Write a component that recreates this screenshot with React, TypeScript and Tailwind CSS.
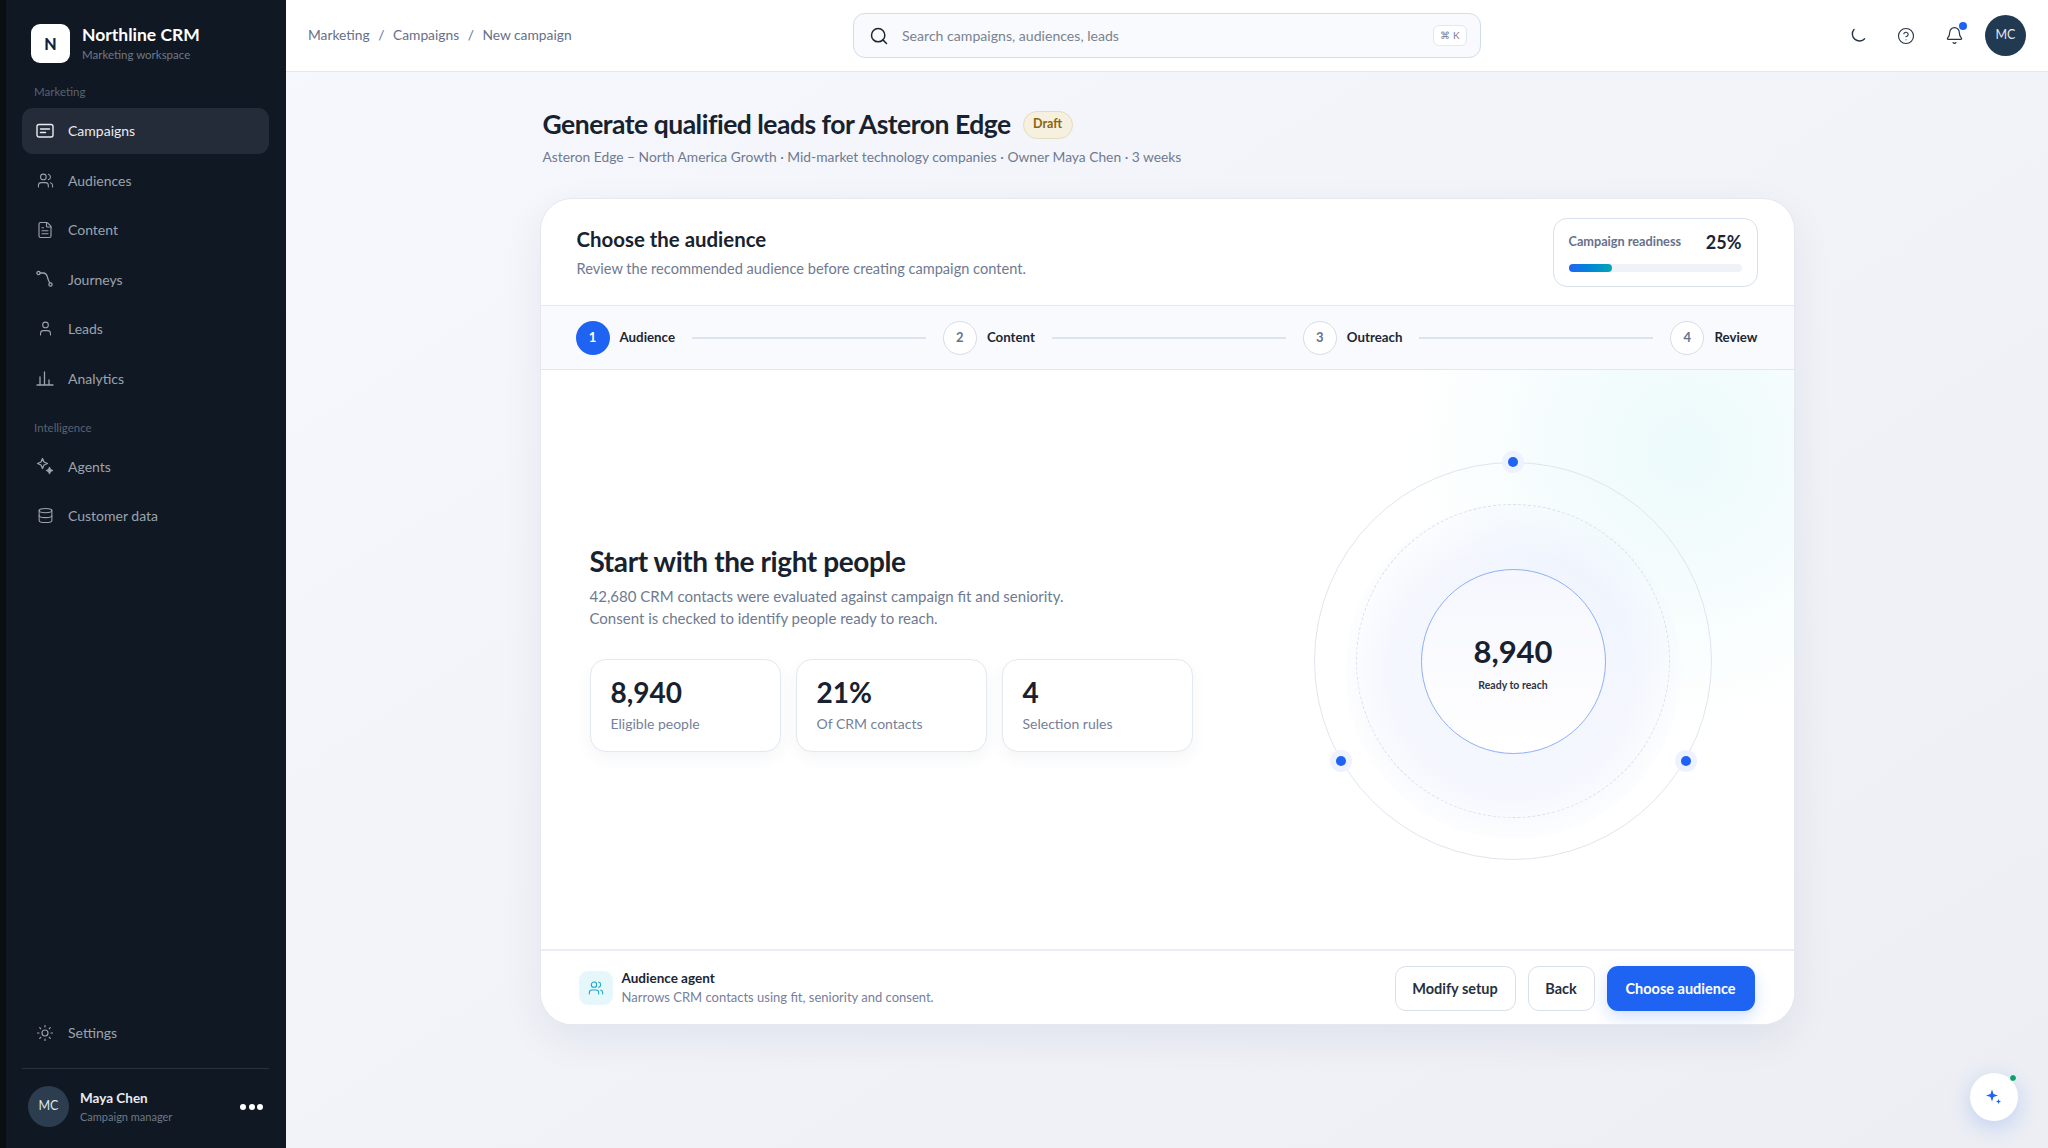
import React from 'react'
import { Users, FileText, User, Database, Sun, Search, CircleHelp, Bell } from 'lucide-react'

const CampaignIcon = () => (
  <svg width="18" height="18" viewBox="0 0 18 18" fill="none" stroke="currentColor" strokeWidth="1.4" strokeLinecap="round">
    <rect x="1" y="2.5" width="16" height="12.5" rx="2" />
    <path d="M4.5 7h9M4.5 10.5h5" />
  </svg>
)

const JourneyIcon = () => (
  <svg width="18" height="18" viewBox="0 0 18 18" fill="none" stroke="currentColor" strokeWidth="1.3" strokeLinecap="round">
    <circle cx="2.5" cy="3" r="1.6" />
    <circle cx="14.5" cy="14.5" r="1.6" />
    <path d="M4.2 3h3.3c2.5 0 3 1.2 3.7 3.4l1 3.2c.3 1 .8 2 1.6 3.2" />
  </svg>
)

const AnalyticsIcon = () => (
  <svg width="18" height="18" viewBox="0 0 18 18" fill="none" stroke="currentColor" strokeWidth="1.3" strokeLinecap="round">
    <path d="M1 16h16M4 16V8M8.5 16V3M13 16v-5" />
  </svg>
)

const AgentsIcon = () => (
  <svg width="18" height="18" viewBox="0 0 18 18" fill="none" stroke="currentColor" strokeWidth="1.3" strokeLinejoin="round">
    <path d="M6.5 1.500 8 5l3.500 1.500L8 8 6.500 11.500 5 8 1.500 6.500 5 5z" />
    <path d="M13.500 10.500l.9 2.100 2.100.9-2.100.9-.9 2.100-.9-2.100-2.100-.9 2.100-.9z" fill="currentColor" />
  </svg>
)

const MoonIcon = () => (
  <svg width="16" height="16" viewBox="0 0 16 16" fill="none" stroke="currentColor" strokeWidth="1.4" strokeLinecap="round">
    <path d="M3 1.500C1.600 3 1 4.600 1.400 6.800 2 10.600 5.300 13.200 9 13c2-.1 3.500-1 4.600-2.300" />
  </svg>
)

const SparkleFab = () => (
  <svg width="18" height="18" viewBox="0 0 18 18" fill="#1f63f2">
    <path d="M7 1.500 8.500 6 13 7.500 8.500 9 7 13.500 5.500 9 1 7.500 5.500 6z" />
    <path d="M13.500 11l.7 1.800 1.800.7-1.800.7-.7 1.800-.7-1.800-1.800-.7 1.800-.7z" />
  </svg>
)

const NavItem = ({ icon, label, active }: { icon: React.ReactNode; label: string; active?: boolean }) => (
  <div className={`flex h-[46px] items-center gap-[14px] rounded-[11px] pb-[1px] pl-[14px] text-[14px] ${active ? 'bg-[#252c39] text-[#e8ebf0]' : 'text-[#9ca3ad]'}`}>
    <span className="flex w-[18px] justify-center">{icon}</span>
    <span>{label}</span>
  </div>
)

const Stat = ({ value, label }: { value: string; label: string }) => (
  <div className="flex h-[93px] w-[191px] flex-col rounded-[16px] border border-[#e3e8f1] bg-white pl-[20px] pt-[13px] shadow-[0_6px_16px_rgba(30,50,90,0.05)]">
    <div className="text-[28px] font-bold leading-[38px] text-[#17212f]">{value}</div>
    <div className="mt-[4px] text-[14px] leading-[18px] text-[#76809a]">{label}</div>
  </div>
)

const Step = ({ n, label, active }: { n: number; label: string; active?: boolean }) => (
  <div className="flex items-center gap-[10px]">
    <div className={`flex h-[34px] w-[34px] items-center justify-center rounded-full text-[13px] font-bold ${active ? 'bg-[#1f63f2] text-white' : 'border border-[#d6dde9] bg-white text-[#67718a]'}`}>{n}</div>
    <span className="text-[13.3px] font-bold text-[#1d2735]">{label}</span>
  </div>
)

const StepLine = () => <div className="h-[2px] flex-1 bg-[#dde3ee]" />

const Dot = ({ pos }: { pos: string }) => (
  <div className={`absolute flex h-[22px] w-[22px] items-center justify-center rounded-full bg-[#edf2fe] ${pos}`}>
    <div className="h-[10px] w-[10px] rounded-full bg-[#1f63f2]" />
  </div>
)

export default function App() {
  return (
    <div className="flex h-[1148px] w-[2048px] overflow-hidden bg-[#f4f6fb] font-['Lato',sans-serif]">
      <aside className="flex h-full w-[286px] shrink-0 flex-col border-l-[6px] border-[#0a0e13] bg-[#101823] pl-[16px] pr-[17px] pt-[24px]">
        <div className="flex items-center gap-[12px] pl-[9px]">
          <div className="flex h-[39px] w-[39px] items-center justify-center rounded-[9px] bg-white text-[16px] font-black text-[#14233a]">N</div>
          <div>
            <div className="text-[17.5px] font-bold leading-[22px] text-white">Northline CRM</div>
            <div className="mt-[1px] text-[11.5px] leading-[16px] text-[#6f7886]">Marketing workspace</div>
          </div>
        </div>
        <div className="mb-[8px] mt-[21px] pl-[12px] text-[11.5px] leading-[16px] text-[#59626f]">Marketing</div>
        <nav className="flex flex-col gap-[3.5px]">
          <NavItem active icon={<CampaignIcon />} label="Campaigns" />
          <NavItem icon={<Users size={17} strokeWidth={1.5} />} label="Audiences" />
          <NavItem icon={<FileText size={18} strokeWidth={1.5} />} label="Content" />
          <NavItem icon={<JourneyIcon />} label="Journeys" />
          <NavItem icon={<User size={17} strokeWidth={1.5} />} label="Leads" />
          <NavItem icon={<AnalyticsIcon />} label="Analytics" />
        </nav>
        <div className="mb-[8px] mt-[18px] pl-[12px] text-[11.5px] leading-[16px] text-[#59626f]">Intelligence</div>
        <nav className="flex flex-col gap-[3.5px]">
          <NavItem icon={<AgentsIcon />} label="Agents" />
          <NavItem icon={<Database size={17} strokeWidth={1.5} />} label="Customer data" />
        </nav>
        <div className="mt-auto">
          <NavItem icon={<Sun size={18} strokeWidth={1.5} />} label="Settings" />
          <div className="mt-[12px] h-px bg-[#2b323d]" />
          <div className="flex h-[79px] items-center pb-[4px] pl-[6px]">
            <div className="flex h-[41px] w-[41px] items-center justify-center rounded-full bg-[#2d3d50] text-[12.5px] text-[#dfe4ea]">MC</div>
            <div className="ml-[11px] flex-1">
              <div className="text-[13.5px] font-bold leading-[18px] text-[#e8ebf0]">Maya Chen</div>
              <div className="mt-[2px] text-[11px] leading-[15px] text-[#6f7886]">Campaign manager</div>
            </div>
            <div className="flex gap-[2.5px] pr-[6px]">
              <span className="h-[6px] w-[6px] rounded-full bg-white" />
              <span className="h-[6px] w-[6px] rounded-full bg-white" />
              <span className="h-[6px] w-[6px] rounded-full bg-white" />
            </div>
          </div>
        </div>
      </aside>

      <div className="flex h-full flex-1 flex-col bg-gradient-to-br from-[#f6f8fd] to-[#eceef3]">
        <header className="flex h-[72px] shrink-0 items-center border-b border-[#e2e7f0] bg-white pl-[22px] pr-[22px]">
          <div className="flex w-[545px] items-center gap-[8.5px] text-[13.8px] text-[#66708a]">
            <span>Marketing</span>
            <span>/</span>
            <span>Campaigns</span>
            <span>/</span>
            <span>New campaign</span>
          </div>
          <div className="flex h-[45px] w-[628px] items-center rounded-[12px] border border-[#d3dcea] bg-[#f9fafd] pl-[15px] pr-[13px]">
            <Search size={20} strokeWidth={1.8} className="text-[#1b2534]" />
            <span className="ml-[13px] flex-1 text-[14.1px] text-[#79828f]">Search campaigns, audiences, leads</span>
            <div className="flex h-[21px] w-[34px] items-center justify-center rounded-[6px] border border-[#e2e7f0] bg-white text-[10px] text-[#77808f]">⌘ K</div>
          </div>
          <div className="ml-[auto] flex items-center">
            <span className="ml-[2px] text-[#2a3442]"><MoonIcon /></span>
            <span className="ml-[30px] text-[#2a3442]"><CircleHelp size={18} strokeWidth={1.5} /></span>
            <span className="relative ml-[30px] text-[#2a3442]">
              <Bell size={19} strokeWidth={1.5} />
              <span className="absolute -right-[3px] -top-[4px] h-[8px] w-[8px] rounded-full bg-[#1f63f2]" />
            </span>
            <div className="ml-[21px] flex h-[41px] w-[41px] items-center justify-center rounded-full bg-[#213a52] text-[12.5px] text-[#e3e8ee]">MC</div>
          </div>
        </header>

        <main className="relative flex-1">
          <div className="mx-auto w-[1255px] pt-[34px]">
            <div className="flex items-center gap-[12px] pl-[3px]">
              <h1 className="text-[26.5px] font-bold leading-[36px] tracking-[-0.5px] text-[#18222f]">Generate qualified leads for Asteron Edge</h1>
              <span className="mt-[1px] flex h-[28px] w-[50px] items-center justify-center rounded-full border border-[#e6dcc0] bg-[#f6f0de] text-[12.5px] font-bold text-[#8a6412]">Draft</span>
            </div>
            <p className="mt-[5px] pl-[3px] text-[13.8px] leading-[20px] text-[#6f7a90]">Asteron Edge – North America Growth · Mid-market technology companies · Owner Maya Chen · 3 weeks</p>

            <section className="mt-[31px] flex h-[827px] flex-col overflow-hidden rounded-[32px] border border-[#e4e8f0] bg-white shadow-[0_14px_40px_rgba(30,45,80,0.07)]">
              <div className="flex h-[107px] shrink-0 items-start justify-between border-b border-[#e3e7ef] pl-[36px] pr-[36px] pt-[19px]">
                <div>
                  <h2 className="mt-[1px] text-[20.4px] font-bold leading-[40px] text-[#18222f]">Choose the audience</h2>
                  <p className="text-[14.6px] leading-[20px] text-[#6f7a90]">Review the recommended audience before creating campaign content.</p>
                </div>
                <div className="h-[69px] w-[205px] rounded-[14px] border border-[#d8e0ec] bg-white px-[15px] pt-[12px]">
                  <div className="flex items-center justify-between">
                    <span className="text-[12.7px] font-bold text-[#67718a]">Campaign readiness</span>
                    <span className="text-[18px] font-bold leading-[22px] text-[#1b2534]">25%</span>
                  </div>
                  <div className="mt-[11px] h-[8px] w-full rounded-full bg-[#eff3f7]">
                    <div className="h-full w-1/4 rounded-full bg-gradient-to-r from-[#1f63f2] to-[#06a5b3]" />
                  </div>
                </div>
              </div>

              <div className="flex h-[64px] shrink-0 items-center gap-[17px] border-b border-[#e3e7ef] bg-[#f9fafd] pl-[35px] pr-[36px]">
                <Step active n={1} label="Audience" />
                <StepLine />
                <Step n={2} label="Content" />
                <StepLine />
                <Step n={3} label="Outreach" />
                <StepLine />
                <Step n={4} label="Review" />
              </div>

              <div className="relative flex flex-1 items-start overflow-hidden bg-white">
                <div className="absolute -right-[170px] -top-[200px] h-[560px] w-[560px] rounded-full bg-[radial-gradient(circle,rgba(205,242,245,0.38)_0%,rgba(255,255,255,0)_70%)]" />
                <div className="relative z-10 pl-[49px] pt-[171px]">
                  <h3 className="text-[28px] font-bold leading-[40px] tracking-[-0.4px] text-[#18222f]">Start with the right people</h3>
                  <p className="mt-[4px] text-[15px] leading-[22px] text-[#6f7a90]">42,680 CRM contacts were evaluated against campaign fit and seniority.<br />Consent is checked to identify people ready to reach.</p>
                  <div className="mt-[30px] flex gap-[15px]">
                    <Stat value="8,940" label="Eligible people" />
                    <Stat value="21%" label="Of CRM contacts" />
                    <Stat value="4" label="Selection rules" />
                  </div>
                </div>

                {/* audience rings */}
                <div className="absolute left-[773px] top-[92px] h-[398px] w-[398px] rounded-full border border-[#e0e5ee]">
                  <div className="absolute left-[30px] top-[40px] h-[336px] w-[336px] rounded-full bg-[radial-gradient(circle,rgba(232,236,253,0.45)_50%,rgba(240,243,254,0.12)_72%,rgba(255,255,255,0)_95%)]" />
                  <div className="absolute left-[41px] top-[41px] h-[314px] w-[314px] rounded-full border border-dashed border-[#d9dfe9]" />
                  <div className="absolute left-[106px] top-[106px] flex h-[185px] w-[185px] flex-col items-center rounded-full border border-[#8fb0f5] bg-gradient-to-b from-[#f6f7fe] to-white pt-[61px]">
                    <div className="text-[31px] font-bold leading-[40px] text-[#17212f]">8,940</div>
                    <div className="mt-[7px] text-[10.5px] font-bold leading-[14px] text-[#2a3442]">Ready to reach</div>
                  </div>
                  <Dot pos="left-[187px] -top-[12px]" />
                  <Dot pos="left-[15px] top-[287px]" />
                  <Dot pos="left-[360px] top-[287px]" />
                </div>
              </div>

              <div className="flex h-[75px] shrink-0 items-center border-t-2 border-[#e9ecf3] bg-white pl-[38px] pr-[39px]">
                <div className="flex h-[34px] w-[34px] items-center justify-center rounded-[9px] bg-[#e6f7fc] text-[#1aa9c4]">
                  <Users size={16} strokeWidth={1.6} />
                </div>
                <div className="ml-[9px] flex-1">
                  <div className="text-[13.5px] font-bold leading-[18px] text-[#1b2534]">Audience agent</div>
                  <div className="mt-[1px] text-[13px] leading-[18px] text-[#76809a]">Narrows CRM contacts using fit, seniority and consent.</div>
                </div>
                <div className="mt-[2px] flex gap-[12px] text-[14.5px] font-bold">
                  <div className="flex h-[45px] w-[121px] items-center justify-center rounded-[11px] border border-[#d8e0ec] text-[#263140]">Modify setup</div>
                  <div className="flex h-[45px] w-[67px] items-center justify-center rounded-[11px] border border-[#d8e0ec] text-[#263140]">Back</div>
                  <div className="flex h-[45px] w-[148px] items-center justify-center rounded-[11px] bg-[#1f63f2] text-white shadow-[0_6px_16px_rgba(31,99,242,0.2)]">Choose audience</div>
                </div>
              </div>
            </section>
          </div>

          <div className="absolute bottom-[27px] right-[30px] flex h-[48px] w-[48px] items-center justify-center rounded-full bg-white shadow-[0_6px_22px_rgba(31,99,242,0.22)]">
            <SparkleFab />
            <span className="absolute right-[1px] top-[1px] box-content h-[6px] w-[6px] rounded-full border-[1.5px] border-white bg-[#0f9d6e]" />
          </div>
        </main>
      </div>
    </div>
  )
}
